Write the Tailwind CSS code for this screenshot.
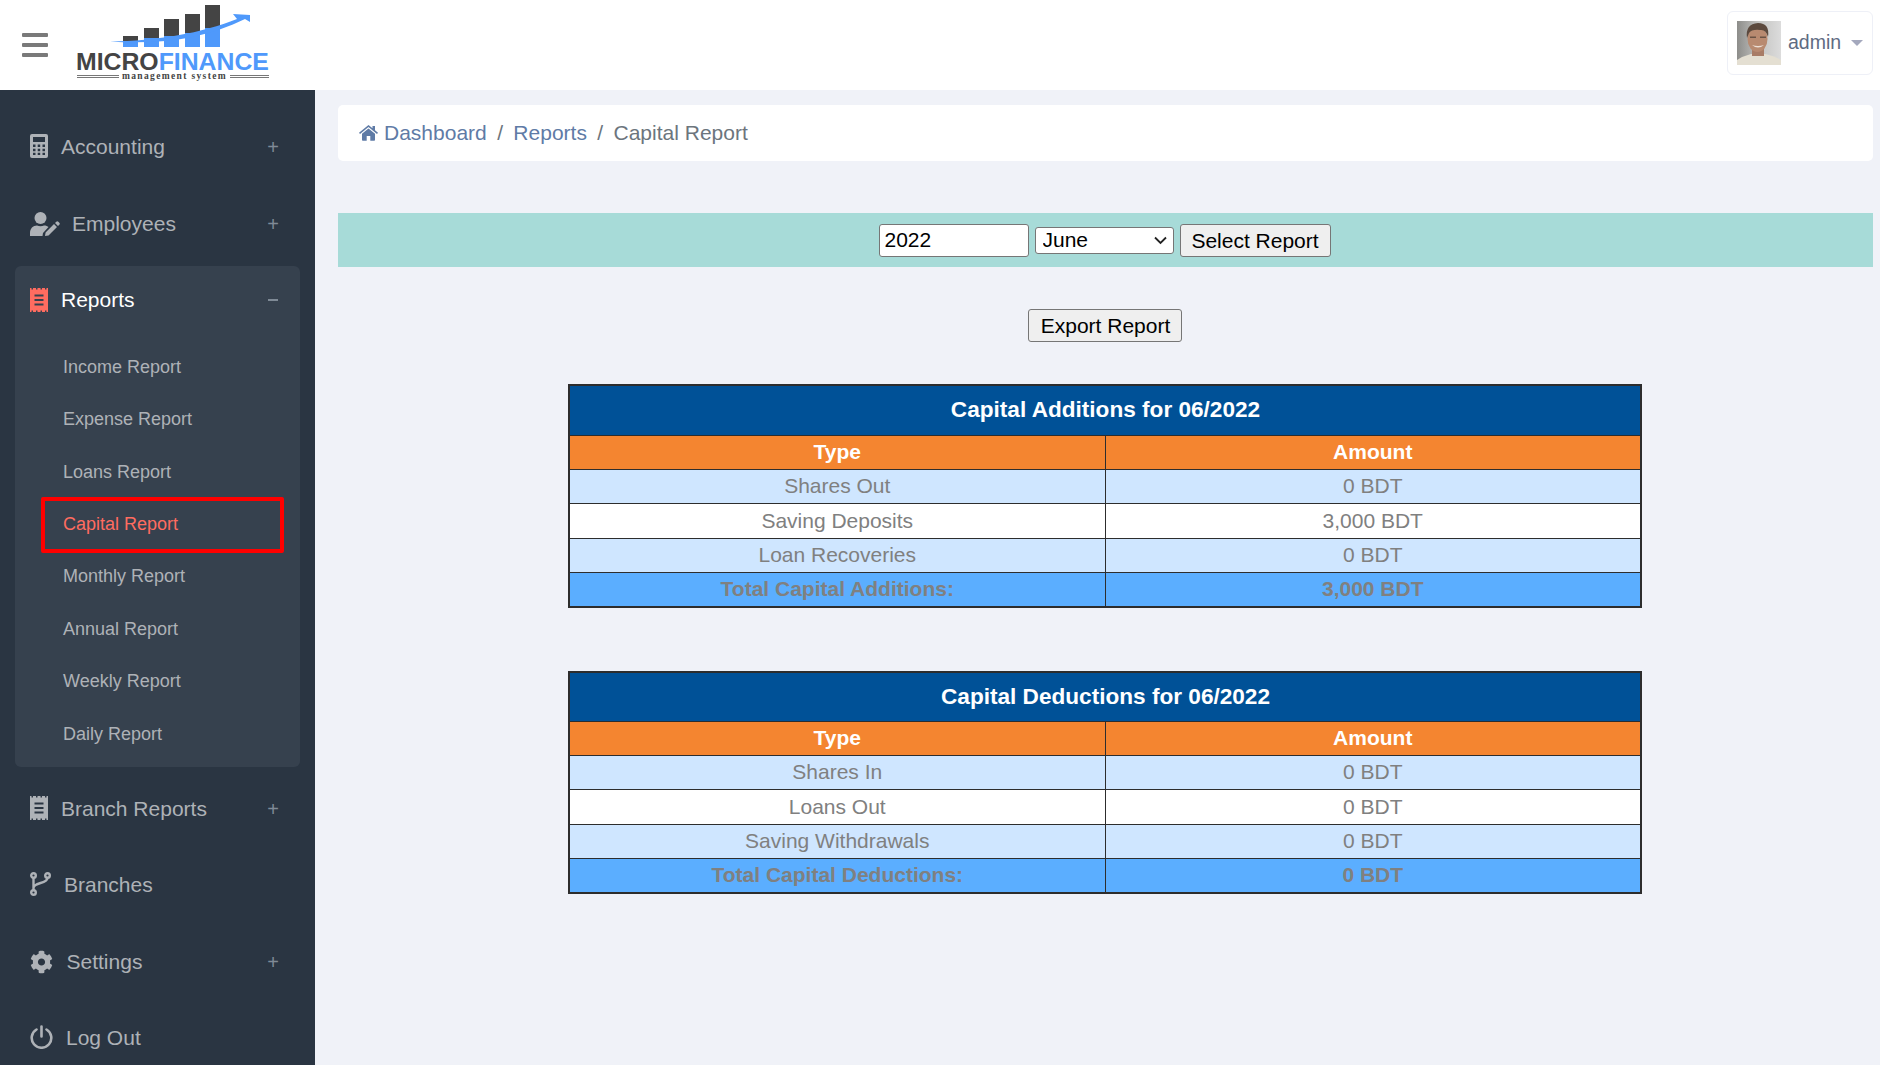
<!DOCTYPE html>
<html lang="en">
<head>
  <meta charset="UTF-8">
  <title>Capital Report</title>
  <script src="https://cdn.jsdelivr.net/npm/@tailwindcss/browser@4"></script>
</head>
<body class="bg-[#f0f2f8] font-['Liberation_Sans',Arial,sans-serif] h-[1065px] overflow-hidden">
  <!-- Top bar -->
  <header class="h-[90px] bg-white flex items-center justify-between pr-[7px]">
    <div class="flex items-center">
      <div class="ml-[22px] w-[26px] flex flex-col gap-[6px]">
        <span class="block h-[4px] rounded-[1px] bg-[#7a7a7a]"></span>
        <span class="block h-[4px] rounded-[1px] bg-[#7a7a7a]"></span>
        <span class="block h-[4px] rounded-[1px] bg-[#7a7a7a]"></span>
      </div>
      <!-- Logo -->
      <div class="relative ml-[29px] w-[192px] h-[90px]">
        <svg class="absolute left-0 top-0" width="192" height="50" viewBox="0 0 192 50">
          <g fill="#444">
            <rect x="46" y="36" width="15" height="11"/>
            <rect x="67" y="28" width="15" height="19"/>
            <rect x="87" y="19" width="15" height="28"/>
            <rect x="108" y="14" width="15" height="33"/>
            <rect x="128" y="5" width="15" height="42"/>
          </g>
          <g fill="#4f99fb">
            <rect x="46" y="41" width="15" height="6"/>
            <rect x="67" y="38" width="15" height="9"/>
            <rect x="87" y="36" width="15" height="11"/>
            <rect x="108" y="33" width="15" height="14"/>
            <rect x="128" y="28" width="15" height="19"/>
            <path d="M33 41.500C80 41 125 33 160 19L156 14L173 15L173 22L168 19C130 38 85 45 33 41.500Z"/>
          </g>
        </svg>
        <div class="absolute -left-[1px] top-[52px] w-[194px] flex text-[24.800px] leading-[20px] font-bold whitespace-nowrap">
          <span class="text-[#444]">MICRO</span><span class="text-[#4f99fb]">FINANCE</span>
        </div>
        <div class="absolute left-0 top-[72px] w-[192px] flex items-center gap-[3px]">
          <span class="w-[42px] h-[3px] border-y border-[#777]"></span>
          <span class="font-['Liberation_Serif',serif] text-[9.500px] leading-[9px] font-bold tracking-[1.350px] text-[#444] whitespace-nowrap">management system</span>
          <span class="flex-1 h-[3px] border-y border-[#777]"></span>
        </div>
      </div>
    </div>
    <!-- User -->
    <div class="w-[146px] h-[64px] mb-[5px] border border-[#eef0f7] rounded-[6px] flex items-center pl-[9px]">
      <svg width="44" height="44" viewBox="0 0 44 44">
        <defs>
          <linearGradient id="av" x1="0" y1="0" x2="1" y2="0">
            <stop offset="0" stop-color="#8d8d8a"/><stop offset="0.5" stop-color="#c4c4c2"/><stop offset="1" stop-color="#dcdcdc"/>
          </linearGradient>
          <filter id="soft"><feGaussianBlur stdDeviation="0.7"/></filter>
        </defs>
        <rect width="44" height="44" fill="url(#av)"/>
        <g filter="url(#soft)">
          <path d="M0 44V39Q6 35 14 33H28Q38 35 44 39V44Z" fill="#e4dfd2"/>
          <rect x="15" y="26" width="12" height="9" fill="#a87c66"/>
          <ellipse cx="20.500" cy="18" rx="10" ry="13" fill="#b88a70"/>
          <path d="M10 17Q8 3 21 2Q33 2 31 16Q29 8 23 9Q15 8 12 12Z" fill="#5b4a3e"/>
          <rect x="13" y="15.500" width="6" height="1.500" fill="#6b5244"/><rect x="23" y="15.500" width="6" height="1.500" fill="#6b5244"/>
          <path d="M15 24Q21 29 27 24Q21 26 15 24Z" fill="#ecdfd4"/>
        </g>
      </svg>
      <span class="ml-[7px] text-[19.500px] text-[#5f6b82]">admin</span>
      <span class="ml-[10px] mt-[1px] w-0 h-0 border-x-[6px] border-x-transparent border-t-[6px] border-t-[#a4a8bd]"></span>
    </div>
  </header>

  <div class="flex">
    <!-- Sidebar -->
    <aside class="w-[315px] h-[975px] shrink-0 bg-[#2a3542] pt-[19px] text-[#aeb2b7] text-[21px]">
      <a class="h-[77px] flex items-center pl-[30px] pr-[37px] pb-[1px]">
        <svg class="w-[18px] h-[24px] mr-[13px] mb-[3px] fill-current" viewBox="0 0 18 24"><path fill-rule="evenodd" d="M2 0h14a2 2 0 0 1 2 2v20a2 2 0 0 1-2 2H2a2 2 0 0 1-2-2V2a2 2 0 0 1 2-2ZM3 3v5h12V3ZM3 10.500v2.500h2.500v-2.500ZM7.700 10.500v2.500h2.500v-2.500ZM12.500 10.500v2.500H15v-2.500ZM3 14.700v2.500h2.500v-2.500ZM7.700 14.700v2.500h2.500v-2.500ZM12.500 14.700v2.500H15v-2.500ZM3 18.700v2.300h2.500v-2.300ZM7.700 18.700v2.300h2.500v-2.300ZM12.500 18.700v2.300H15v-2.300Z"/></svg>
        <span class="flex-1">Accounting</span>
        <span class="text-[20px] text-[#7f8a96] -mr-[1px]">+</span>
      </a>
      <a class="h-[76px] flex items-center pl-[30px] pr-[37px]">
        <svg class="w-[30px] h-[24px] mr-[12px] fill-current" viewBox="0 0 30 24"><circle cx="10.500" cy="6" r="6"/><path d="M0 24v-3c0-4.500 3-7.500 7-7.500 2 1 5 1 7 0 2 0 3.500.7 4.500 1.500L13 21l-.5 3Z"/><path d="M15 24l.6-3.500L24 12l3 3-8.500 8.500ZM25 11l1.300-1.300a1.400 1.400 0 0 1 2 0l1 1a1.400 1.400 0 0 1 0 2L28 14Z"/></svg>
        <span class="flex-1">Employees</span>
        <span class="text-[20px] text-[#7f8a96] -mr-[1px]">+</span>
      </a>

      <!-- Open group -->
      <div class="mx-[15px] mt-[4px] h-[501px] bg-[#36414e] rounded-[6px]">
        <a class="h-[75.150px] flex items-center pl-[15px] pr-[22px] pt-[1px] pb-[8px]">
          <svg class="w-[18px] h-[24px] mr-[13px] fill-[#ff6c60]" viewBox="0 0 18 24"><path fill-rule="evenodd" d="M0 0h1.500v1.500H3V0h3v1.500h1.500V0h3v1.500H12V0h3v1.500h1.500V0H18v24h-1.500v-1.500H15V24h-3v-1.500h-1.500V24h-3v-1.500H6V24H3v-1.500H1.500V24H0ZM4.500 6.500v2h9v-2ZM4.500 11v2h9v-2ZM4.500 15.500v2h9v-2Z"/></svg>
          <span class="flex-1 text-white">Reports</span>
          <span class="w-[10px] h-[1.500px] bg-[#7f8a96]"></span>
        </a>
        <div class="text-[18px] text-[#aeb2b7]">
          <a class="h-[52.500px] flex items-center pl-[48px]">Income Report</a>
          <a class="h-[52.500px] flex items-center pl-[48px]">Expense Report</a>
          <a class="h-[52.500px] flex items-center pl-[48px]">Loans Report</a>
          <a class="h-[56px] -my-[2px] ml-[26px] mr-[16px] pl-[18px] flex items-center border-[4px] border-[#ff0000] rounded-[2px] text-[#ff6c60]">Capital Report</a>
          <a class="h-[52.500px] flex items-center pl-[48px]">Monthly Report</a>
          <a class="h-[52.500px] flex items-center pl-[48px]">Annual Report</a>
          <a class="h-[52.500px] flex items-center pl-[48px]">Weekly Report</a>
          <a class="h-[52.500px] flex items-center pl-[48px]">Daily Report</a>
        </div>
      </div>

      <a class="h-[76px] mt-[4px] flex items-center pl-[30px] pr-[37px]">
        <svg class="w-[18px] h-[24px] mr-[13px] mb-[2px] fill-current" viewBox="0 0 18 24"><path fill-rule="evenodd" d="M0 0h1.500v1.500H3V0h3v1.500h1.500V0h3v1.500H12V0h3v1.500h1.500V0H18v24h-1.500v-1.500H15V24h-3v-1.500h-1.500V24h-3v-1.500H6V24H3v-1.500H1.500V24H0ZM4.500 6.500v2h9v-2ZM4.500 11v2h9v-2ZM4.500 15.500v2h9v-2Z"/></svg>
        <span class="flex-1">Branch Reports</span>
        <span class="text-[20px] text-[#7f8a96] -mr-[1px]">+</span>
      </a>
      <a class="h-[76px] flex items-center pl-[30px] pr-[37px]">
        <svg class="w-[21px] h-[24px] mr-[13px] mb-[2px]" viewBox="0 0 21 24" fill="none" stroke="currentColor" stroke-width="2.400"><circle cx="3.500" cy="3.500" r="2.300"/><circle cx="3.500" cy="20.500" r="2.300"/><circle cx="17.500" cy="3.500" r="2.300"/><path d="M3.500 6v12M17.500 6c0 6-14 4-14 10"/></svg>
        <span class="flex-1">Branches</span>
      </a>
      <a class="h-[77px] flex items-center pl-[30px] pr-[37px]">
        <svg class="w-[23px] h-[24px] mr-[13.500px] fill-current" viewBox="0 0 512 512"><path d="M487.400 315.700l-42.600-24.600c4.300-23.200 4.300-47 0-70.200l42.600-24.600c4.900-2.800 7.100-8.600 5.500-14-11.100-35.600-30-67.800-54.700-94.600-3.800-4.100-10-5.100-14.800-2.300L380.800 110c-17.900-15.400-38.500-27.300-60.800-35.100V25.800c0-5.600-3.900-10.500-9.400-11.700-36.700-8.200-74.300-7.800-109.200 0-5.500 1.200-9.400 6.100-9.400 11.700V75c-22.200 7.900-42.800 19.800-60.800 35.100L88.700 85.500c-4.900-2.800-11-1.900-14.800 2.300-24.700 26.700-43.600 58.900-54.700 94.600-1.700 5.400.6 11.200 5.500 14L67.300 221c-4.300 23.200-4.300 47 0 70.200l-42.600 24.600c-4.900 2.800-7.100 8.600-5.500 14 11.100 35.600 30 67.800 54.700 94.600 3.800 4.100 10 5.100 14.800 2.300l42.600-24.600c17.900 15.400 38.500 27.300 60.800 35.100v49.200c0 5.600 3.900 10.500 9.400 11.700 36.700 8.200 74.300 7.800 109.200 0 5.500-1.200 9.400-6.100 9.400-11.700v-49.200c22.200-7.900 42.800-19.800 60.800-35.100l42.600 24.600c4.900 2.800 11 1.900 14.800-2.300 24.700-26.700 43.600-58.900 54.700-94.600 1.500-5.500-.7-11.300-5.600-14.100zM256 336c-44.100 0-80-35.900-80-80s35.900-80 80-80 80 35.900 80 80-35.900 80-80 80z"/></svg>
        <span class="flex-1">Settings</span>
        <span class="text-[20px] text-[#7f8a96] -mr-[1px]">+</span>
      </a>
      <a class="h-[76px] flex items-center pl-[30px] pr-[37px]">
        <svg class="w-[23px] h-[24px] mr-[13px] mb-[2px]" viewBox="0 0 23 24" fill="none" stroke="currentColor" stroke-width="2.600" stroke-linecap="round"><path d="M11.500 1.500v10M6.500 4.500a9.800 9.800 0 1 0 10 0"/></svg>
        <span>Log Out</span>
      </a>
    </aside>

    <!-- Main -->
    <main class="flex-1 pl-[23px] pr-[7px] pt-[15px]">
      <nav class="h-[56px] bg-white rounded-[5px] flex items-center pl-[21px] text-[21px] text-[#5f7ba6]">
        <svg class="w-[19px] h-[16px] mr-[6px] fill-current" viewBox="0 0 19 16"><path d="M9.500 3.400 3 8.800V15a.8.8 0 0 0 .8.800h3.900v-4.800h3.600v4.800h3.900A.8.8 0 0 0 16 15V8.800Z"/><path d="M9.500 0 0 7.800l1 1.200 8.500-7 8.500 7 1-1.200-3-2.500V1h-2.500v2.200Z"/></svg>
        <span>Dashboard</span>
        <span class="mx-[10.400px] text-[#6c757d]">/</span>
        <span>Reports</span>
        <span class="mx-[10.400px] text-[#6c757d]">/</span>
        <span class="text-[#6c757d]">Capital Report</span>
      </nav>

      <form class="mt-[52px] h-[54px] bg-[#a7dbd8] flex items-center justify-center gap-[6px] text-[21px] text-black pr-[2px]">
        <input value="2022" class="w-[150px] h-[33px] bg-white border border-[#767676] rounded-[3px] px-[5px]">
        <div class="relative w-[139px] h-[27px]">
          <select class="block appearance-none w-full h-full bg-white border border-[#767676] rounded-[3px] pl-[7px] leading-[20px]"><option>June</option></select>
          <svg class="absolute right-[7px] top-[9px] w-[13px] h-[9px] pointer-events-none" viewBox="0 0 13 9" fill="none" stroke="#222" stroke-width="1.800"><path d="M1 1.500l5.500 5.500L12 1.500"/></svg>
        </div>
        <button type="button" class="w-[151px] h-[33px] pb-[1px] bg-[#efefef] border border-[#767676] rounded-[3px]">Select Report</button>
      </form>

      <div class="mt-[42px] pr-[2px] flex justify-center">
        <button type="button" class="w-[154px] h-[33px] pl-[2px] bg-[#efefef] border border-[#767676] rounded-[3px] text-[21px] text-black">Export Report</button>
      </div>

      <table class="mt-[42px] ml-[229.500px] w-[1074px] table-fixed border-collapse border-2 border-[#2d2d2d] text-center text-[21px] text-[#808080] [&_td]:pb-[1px]">
        <colgroup><col class="w-[537px]"><col></colgroup>
        <thead>
          <tr class="h-[50px] bg-[#005197] text-white"><th colspan="2" class="pl-[2px] text-[22.600px] font-bold border border-[#2d2d2d]">Capital Additions for 06/2022</th></tr>
          <tr class="h-[34px] bg-[#f48530] text-white font-bold"><th class="border border-[#2d2d2d]">Type</th><th class="border border-[#2d2d2d]">Amount</th></tr>
        </thead>
        <tbody>
          <tr class="h-[34.500px] bg-[#cfe6ff]"><td class="border border-[#2d2d2d]">Shares Out</td><td class="border border-[#2d2d2d]">0 BDT</td></tr>
          <tr class="h-[34.500px] bg-white"><td class="border border-[#2d2d2d]">Saving Deposits</td><td class="border border-[#2d2d2d]">3,000 BDT</td></tr>
          <tr class="h-[34.500px] bg-[#cfe6ff]"><td class="border border-[#2d2d2d]">Loan Recoveries</td><td class="border border-[#2d2d2d]">0 BDT</td></tr>
          <tr class="h-[34.500px] bg-[#5baeff] font-bold"><td class="border border-[#2d2d2d]">Total Capital Additions:</td><td class="border border-[#2d2d2d]">3,000 BDT</td></tr>
        </tbody>
      </table>

      <table class="mt-[63px] ml-[229.500px] w-[1074px] table-fixed border-collapse border-2 border-[#2d2d2d] text-center text-[21px] text-[#808080] [&_td]:pb-[1px]">
        <colgroup><col class="w-[537px]"><col></colgroup>
        <thead>
          <tr class="h-[49px] bg-[#005197] text-white"><th colspan="2" class="pl-[2px] text-[22.600px] font-bold border border-[#2d2d2d]">Capital Deductions for 06/2022</th></tr>
          <tr class="h-[34px] bg-[#f48530] text-white font-bold"><th class="border border-[#2d2d2d]">Type</th><th class="border border-[#2d2d2d]">Amount</th></tr>
        </thead>
        <tbody>
          <tr class="h-[34.500px] bg-[#cfe6ff]"><td class="border border-[#2d2d2d]">Shares In</td><td class="border border-[#2d2d2d]">0 BDT</td></tr>
          <tr class="h-[34.500px] bg-white"><td class="border border-[#2d2d2d]">Loans Out</td><td class="border border-[#2d2d2d]">0 BDT</td></tr>
          <tr class="h-[34.500px] bg-[#cfe6ff]"><td class="border border-[#2d2d2d]">Saving Withdrawals</td><td class="border border-[#2d2d2d]">0 BDT</td></tr>
          <tr class="h-[34.500px] bg-[#5baeff] font-bold"><td class="border border-[#2d2d2d]">Total Capital Deductions:</td><td class="border border-[#2d2d2d]">0 BDT</td></tr>
        </tbody>
      </table>
    </main>
  </div>
</body>
</html>
